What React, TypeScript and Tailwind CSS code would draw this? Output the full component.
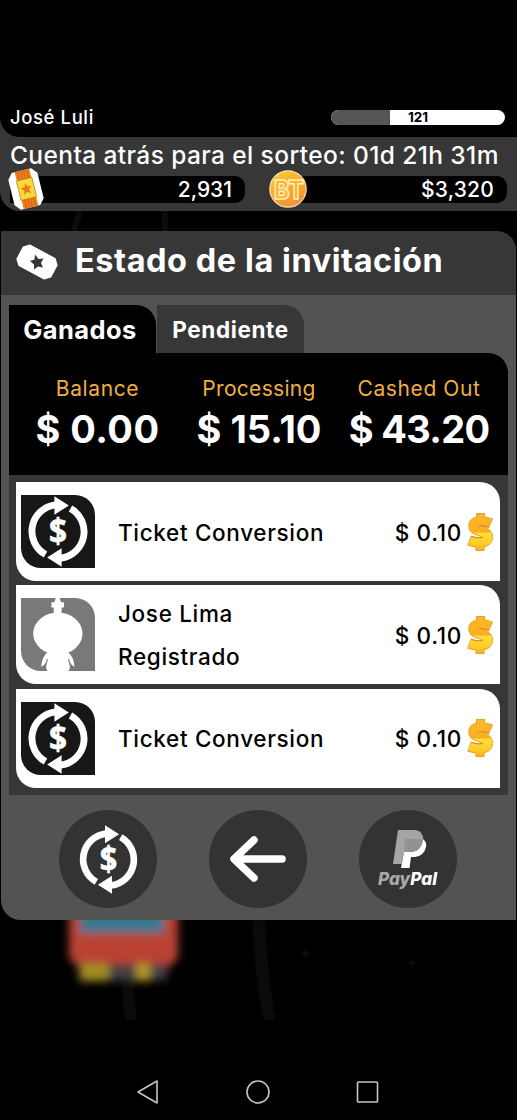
import React from 'react';

const transactions = [
  { title: 'Ticket Conversion', amount: '$ 0.10', kind: 'swap' },
  { title: 'Jose Lima', status: 'Registrado', amount: '$ 0.10', kind: 'user' },
  { title: 'Ticket Conversion', amount: '$ 0.10', kind: 'swap' },
];

const totals = [
  { label: 'Balance', value: '$ 0.00', labelClass: 'tracking-[0.6px]', valueClass: 'tracking-[0.5px]', width: 'w-[161px]' },
  { label: 'Processing', value: '$ 15.10', labelClass: 'tracking-[0.3px]', valueClass: '', width: 'w-[162px]' },
  { label: 'Cashed Out', value: '$ 43.20', labelClass: 'tracking-[0.6px]', valueClass: 'tracking-[-0.7px]', width: 'w-[158px]' },
];

const SwapIcon: React.FC<{ className?: string }> = ({ className }) => (
  <svg viewBox="0 0 222 222" className={className} fill="none">
    <path d="M103 30 A81 81 0 0 0 73 181" stroke="#fff" strokeWidth="21" />
    <path d="M119 192 A81 81 0 0 0 149 41" stroke="#fff" strokeWidth="21" />
    <path d="M100 4 L144 32 L100 60 Z M122 218 L78 190 L122 162 Z" fill="#fff" />
    <text
      transform="translate(111 147) scale(.92 1)"
      textAnchor="middle"
      fontFamily="Open Sans, sans-serif"
      fontWeight="700"
      fontSize="104"
      fill="#fff"
      stroke="#fff"
      strokeWidth="2"
    >
      $
    </text>
  </svg>
);

const UserIcon: React.FC<{ className?: string }> = ({ className }) => (
  <svg viewBox="0 0 222 222" className={className} fill="#fff">
    <path d="M104 0 H116 L120 13 H129 V29 H122 V48 H98 V29 H91 V13 H100 Z" />
    <ellipse cx="110.500" cy="108" rx="75" ry="64" />
    <path d="M80 164 H141 Q158 176 161 208 Q152 206 146 192 Q151 208 143 222 H79 Q71 208 76 192 Q70 206 60 208 Q63 176 80 164 Z" />
    <path d="M79 186 Q76 196 74 206 M143 186 Q146 196 148 206" stroke="#797979" strokeWidth="3.500" fill="none" />
  </svg>
);

const GoldDollar: React.FC = () => (
  <svg viewBox="0 0 26 40" className="w-[26px] h-10 shrink-0" fill="none">
    <defs>
      <linearGradient id="gold" gradientUnits="userSpaceOnUse" x1="0" y1="0" x2="0" y2="40">
        <stop offset="0" stopColor="#ffb92a" />
        <stop offset="0.5" stopColor="#fcae20" />
        <stop offset="0.53" stopColor="#ffe135" />
        <stop offset="0.8" stopColor="#ffcb28" />
        <stop offset="1" stopColor="#fba81d" />
      </linearGradient>
    </defs>
    <g stroke="#eaa12c">
      <path d="M13.500 1 V8 M13 32 V39" strokeWidth="9" />
      <path d="M24 11.500 C16 8 6.500 8.500 6.500 14 C6.500 20 21 18.500 21 25 C21 31.500 10 31.500 2 28.500" strokeWidth="10.500" />
    </g>
    <g stroke="url(#gold)">
      <path d="M13.500 2 L13.600 9 M13 31 L13.100 38" strokeWidth="7" />
      <path d="M23.500 11.300 C16 8 6.500 8.500 6.500 14 C6.500 20 21 18.500 21 25 C21 31.500 10 31.500 2.700 28.700" strokeWidth="8.800" />
    </g>
    <path d="M22 15.500 Q15 12.500 11.500 14 M4 24.500 Q12 27 16 25.500" stroke="#d58b22" strokeWidth="1" />
  </svg>
);

const TicketIcon: React.FC = () => (
  <svg viewBox="0 0 36 42" className="absolute left-[2px] -top-[8.500px] w-9 h-[42px]">
    <g transform="rotate(-14 18 21)">
      <path d="M8 2 H28 L33 8 V34 L28 40 H8 L3 34 V8 Z" fill="#fff" />
      <path d="M11 2 H26 V40 H11 Z" fill="#ee7d1d" />
      <path d="M14 2 V40 M17 2 V40 M20 2 V40 M23 2 V40" stroke="#c95d12" strokeWidth="0.700" />
      <rect x="10.500" y="11" width="16" height="20" fill="#fbd83b" stroke="#a66b13" strokeWidth="0.600" />
      <path d="M18.500 15 L20 19 L24 19.200 L21 22 L22 26.300 L18.500 24 L15 26.300 L16 22 L13 19.200 L17 19 Z" fill="#ea7716" />
    </g>
  </svg>
);

const CoinIcon: React.FC = () => (
  <svg viewBox="0 0 40 40" className="absolute -left-[22px] -top-[7px] size-10 overflow-visible">
    <defs>
      <linearGradient id="coin" x1="0" y1="0" x2="0.500" y2="1">
        <stop offset="0" stopColor="#ffcf2c" />
        <stop offset="1" stopColor="#f3913c" />
      </linearGradient>
    </defs>
    <circle cx="20" cy="20" r="18.200" fill="url(#coin)" stroke="#f7dfad" strokeWidth="1.200" />
    <text
      x="6"
      y="29.500"
      fontFamily="Inter, sans-serif"
      fontWeight="800"
      fontSize="26"
      textLength="30"
      lengthAdjust="spacingAndGlyphs"
      fill="#fbb62c"
      stroke="#fff0c0"
      strokeWidth="1.500"
    >
      BT
    </text>
  </svg>
);

const PayPalIcon: React.FC = () => (
  <svg viewBox="0 0 60 60" className="w-[60px] h-[60px]">
    <path d="M20 1 H37 Q46 2 45 12 Q43 22 32 23 H26 L23.500 35 H15 Z" fill="#a5a5a5" />
    <path d="M45 10 Q49 13 48 18 Q46 27 37 28 H33 L31.500 39 H23 L26 23 H33 Q44 22 45 10 Z" fill="#fff" />
    <path d="M27 10 H44.800 Q44 22 32 23 H26 Z" fill="#929292" />
    <text x="0" y="56" fontFamily="Inter, sans-serif" fontWeight="800" fontStyle="italic" fontSize="17.500" textLength="59" lengthAdjust="spacingAndGlyphs" fill="#fff">
      <tspan fill="#a8a8a8">Pay</tspan>Pal
    </text>
  </svg>
);

const Header: React.FC = () => (
  <header className="h-[114px] bg-[#373737] rounded-bl-[20px] text-white">
    <div className="h-10 bg-black rounded-bl-[20px] flex items-center justify-between pl-2.5 pr-3">
      <span className="pt-0.5 text-[18.500px] font-medium tracking-[0.6px]">José Luli</span>
      <div className="relative flex w-[174px] h-[15px] rounded-full overflow-hidden bg-white">
        <div className="w-[59px] bg-[#555]" />
        <span className="absolute inset-0 text-center text-[13.500px] leading-[15px] font-bold text-black">121</span>
      </div>
    </div>
    <p className="pl-2.5 h-[39px] leading-9 text-[24.500px] font-medium tracking-[0.400px] whitespace-nowrap">Cuenta atrás para el sorteo: 01d 21h 31m</p>
    <div className="flex gap-[45px] pl-2.5">
      <div className="relative w-[235px] h-[27px] bg-black rounded-r-[10px] text-right pr-[13px] text-[21px] leading-[28px] font-medium">
        <div className="absolute -left-1 top-0"><TicketIcon /></div>
        2,931
      </div>
      <div className="relative w-[217px] h-[27px] bg-black rounded-r-[10px] text-right pr-[13px] text-[21px] leading-[28px] font-medium tracking-[0.2px]">
        <CoinIcon />
        $3,320
      </div>
    </div>
  </header>
);

const StatusPanel: React.FC = () => (
  <main className="ml-px w-[515px] h-[689px] bg-[#535353] rounded-tr-[20px] rounded-bl-[20px] overflow-hidden">
    <div className="h-16 bg-[#373737] flex items-center pl-[14px]">
      <svg viewBox="0 0 44 40" className="w-11 h-10 shrink-0">
        <path d="M7 8 H37 L42 13 V27 L37 32 H7 L2 27 V13 Z" fill="#fff" stroke="#fff" strokeWidth="1.500" strokeLinejoin="round" transform="translate(0 -1) rotate(28 22 20) translate(1.100 1) scale(.95)" />
        <path d="M20 12.500 L23.500 17 L28.500 16.500 L26 21 L28 25.500 L23 24.500 L19 27.500 L19 22.500 L15 19 L19.500 17.500 Z" fill="#373737" transform="translate(0 -1)" />
      </svg>
      <h1 className="ml-4 pb-1 text-[32.500px] font-bold tracking-[0.550px] whitespace-nowrap text-white">Estado de la invitación</h1>
    </div>
    <div className="px-2 pt-2.5">
      <div className="flex gap-px h-12 text-white font-bold">
        <div className="w-[147px] bg-black rounded-tr-[20px] flex items-center justify-center pr-[5px] pt-[2px] text-[25.500px] tracking-[0.4px]">Ganados</div>
        <div className="w-[147px] bg-[#373737] rounded-tr-[20px] flex items-center justify-center text-[22.500px] pt-px tracking-[0.6px]">Pendiente</div>
      </div>
      <div className="h-[122px] bg-black rounded-tr-[20px] flex pt-[22px] pl-2">
        {totals.map((total) => (
          <div key={total.label} className={`text-center whitespace-nowrap ${total.width}`}>
            <p className={`text-[21px] leading-7 text-[#f0b040] ${total.labelClass}`}>{total.label}</p>
            <p className={`mt-[3px] text-[38px] leading-[47px] font-bold text-white ${total.valueClass}`}>{total.value}</p>
          </div>
        ))}
      </div>
      <div className="h-80 bg-[#373737] pt-[7px] px-[7px] flex flex-col gap-[4.3px]">
        {transactions.map((item, index) => (
          <div key={index} className="w-[484px] h-[99px] shrink-0 bg-white rounded-tr-[20px] rounded-bl-[20px] flex items-center pl-[5px] pr-[7px] text-black font-medium">
            {item.kind === 'swap' ? (
              <div className="w-[74px] h-[73px] bg-[#171717] rounded-tr-[20px] rounded-bl-[20px] overflow-hidden">
                <SwapIcon className="w-[74px] h-[73px]" />
              </div>
            ) : (
              <div className="w-[74px] h-[73px] bg-[#797979] rounded-tr-[20px] rounded-bl-[20px] overflow-hidden">
                <UserIcon className="w-[74px] h-[73px]" />
              </div>
            )}
            <div className="ml-[23px] text-[22.500px] leading-[43px] tracking-[0.660px] pt-px">
              <p>{item.title}</p>
              {item.status && <p>{item.status}</p>}
            </div>
            <span className="ml-auto mr-[5px] pt-0.5 text-[22.500px] tracking-[0.7px]">{item.amount}</span>
            <GoldDollar />
          </div>
        ))}
      </div>
      <div className="flex gap-[52px] pt-[15px] pl-[50px]">
        <button className="size-[98px] rounded-full bg-[#333] flex items-center justify-center">
          <SwapIcon className="size-[71px]" />
        </button>
        <button className="size-[98px] rounded-full bg-[#333] flex items-center justify-center">
          <svg viewBox="0 0 60 50" className="w-[60px] h-[50px]" fill="none" stroke="#fff" strokeWidth="7.500" strokeLinecap="round" strokeLinejoin="round">
            <path d="M26 6 L6 25 L26 44 M7 25 H54" />
          </svg>
        </button>
        <button className="size-[98px] rounded-full bg-[#333] flex items-center justify-center">
          <PayPalIcon />
        </button>
      </div>
    </div>
  </main>
);

const Scenery: React.FC = () => (
  <svg viewBox="0 0 517 100" className="w-[517px] h-[100px]">
    <defs>
      <filter id="soft" x="-20%" y="-20%" width="140%" height="140%">
        <feGaussianBlur stdDeviation="4" />
      </filter>
    </defs>
    <g filter="url(#soft)">
      <path d="M69 -20 H178 V38 L168 48 H79 L69 38 Z" fill="#b94332" />
      <rect x="80" y="-20" width="84" height="33" fill="#387790" />
      <rect x="79" y="44" width="88" height="16" fill="#444044" />
      <rect x="80" y="44" width="29" height="17" fill="#a18d20" />
      <rect x="136" y="44" width="14" height="17" fill="#b09820" />
      <path d="M259 0 Q261 60 270 100" stroke="#181818" strokeWidth="7" fill="none" />
      <path d="M127 62 L131 100" stroke="#121212" strokeWidth="7" />
      <circle cx="306" cy="33" r="5" fill="#0d0d0d" />
      <circle cx="412" cy="43" r="5" fill="#0d0d0d" />
    </g>
  </svg>
);

const NavBar: React.FC = () => (
  <nav className="h-[100px] pt-[59px] pr-0.5 flex justify-center gap-[86px]">
    <svg viewBox="0 0 24 26" className="w-6 h-[26px]" fill="none" stroke="#c4c4c4" strokeWidth="1.600" strokeLinejoin="round">
      <path d="M2 13 L21 2 V24 Z" />
    </svg>
    <svg viewBox="0 0 24 26" className="w-6 h-[26px]" fill="none" stroke="#c4c4c4" strokeWidth="1.600">
      <circle cx="12" cy="13" r="11" />
    </svg>
    <svg viewBox="0 0 24 26" className="w-6 h-[26px]" fill="none" stroke="#c4c4c4" strokeWidth="1.600">
      <rect x="1.500" y="3" width="20" height="20" rx="0.800" />
    </svg>
  </nav>
);

const App: React.FC = () => {
  return (
    <div className="w-[517px] h-[1120px] bg-black pt-[97px] overflow-hidden font-['Inter',sans-serif]">
      <Header />
      <svg viewBox="0 0 517 20" className="block w-[517px] h-5">
        <path d="M80 0 L74 20 M165 0 V20" stroke="#0c0c0c" strokeWidth="6" />
      </svg>
      <StatusPanel />
      <Scenery />
      <NavBar />
    </div>
  );
};

export default App;
